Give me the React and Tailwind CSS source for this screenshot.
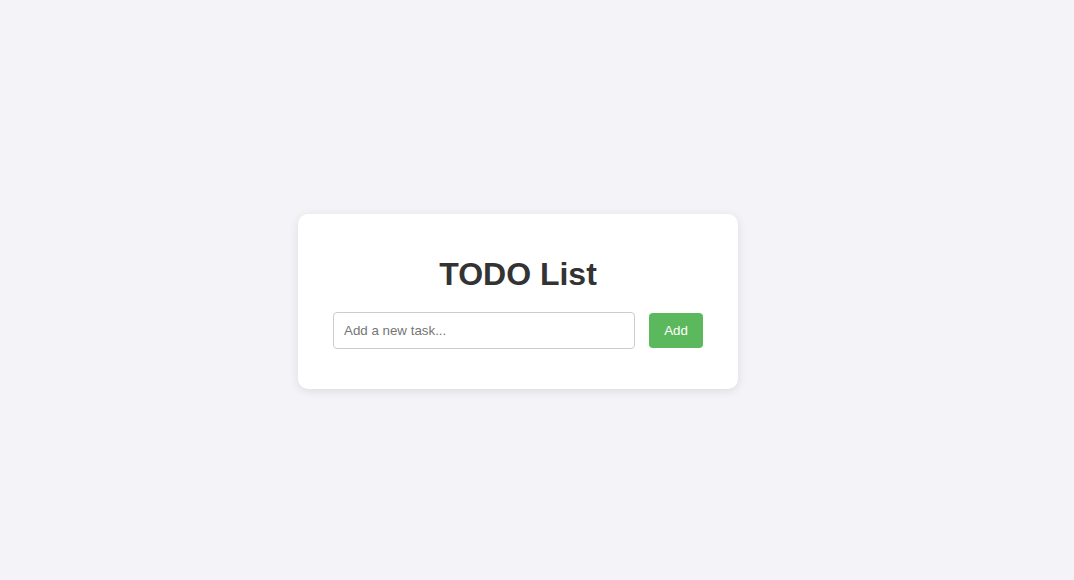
import React, { useState } from 'react';

const App = () => {
    const [task, setTask] = useState('');

    return (
        <div className="min-h-screen w-full bg-[#f4f4f8] flex items-center justify-center pt-[23px] pr-[38px] font-['Liberation_Sans',Arial,sans-serif]">
            <div className="w-[440px] bg-white rounded-[10px] shadow-[0_2px_10px_rgba(0,0,0,0.1)] px-[35px] pt-[42px] pb-[40px]">
                <h1 className="text-[32px] leading-[37px] font-bold text-[#333] text-center mb-[19px]">
                    TODO List
                </h1>
                <div className="flex items-center gap-[14px]">
                    <input
                        type="text"
                        value={task}
                        onChange={(e) => setTask(e.target.value)}
                        placeholder="Add a new task..."
                        className="flex-1 h-[37px] border border-[#ccc] rounded-[4px] px-[10px] text-[13.333px] text-[#333] placeholder:text-[#757575] outline-none"
                    />
                    <button className="w-[54px] h-[35px] bg-[#5cb85c] text-white text-[13.333px] rounded-[4px]">
                        Add
                    </button>
                </div>
            </div>
        </div>
    );
};

export default App;
